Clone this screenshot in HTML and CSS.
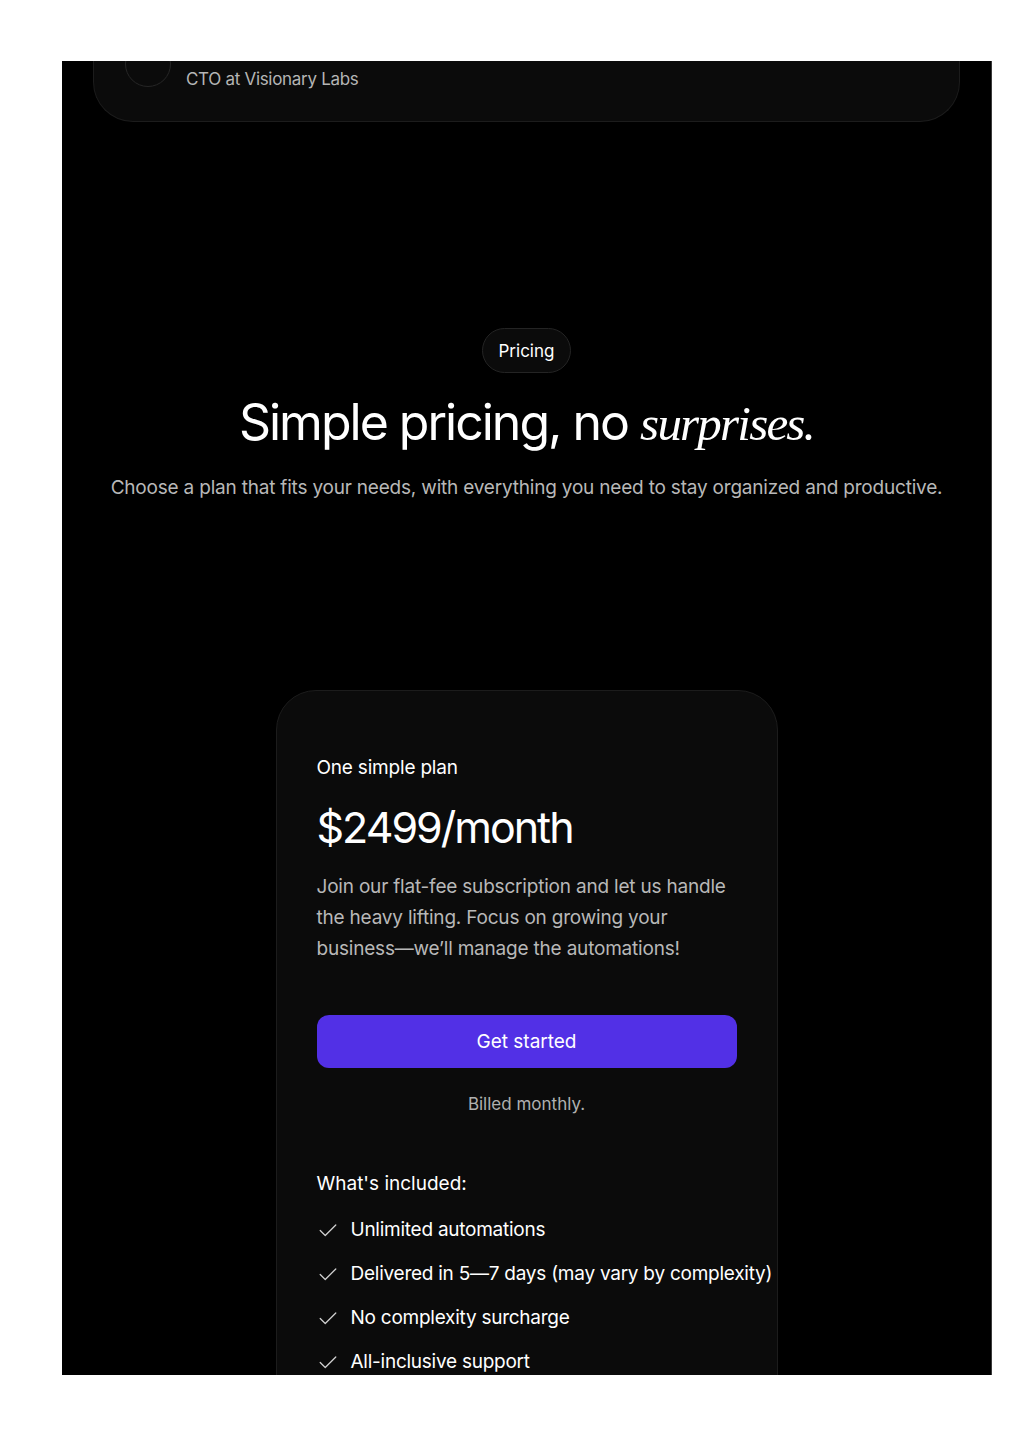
FILE: index.html
```html
<!DOCTYPE html>
<html lang="en">
<head>
    <meta charset="UTF-8">
    <meta name="viewport" content="width=device-width, initial-scale=1.0">
    <title>Pricing</title>
    <link rel="stylesheet" href="styles.css">
</head>
<body>
    <div class="frame">
        <div class="testimonial-card">
            <div class="author">
                <div class="avatar"></div>
                <div class="author-info">
                    <p class="author-name">Daniel Brooks</p>
                    <p class="author-role">CTO at Visionary Labs</p>
                </div>
            </div>
        </div>

        <section class="pricing">
            <span class="pill">Pricing</span>
            <h1>Simple pricing, no <em>surprises.</em></h1>
            <p class="subtitle">Choose a plan that fits your needs, with everything you need to stay organized and productive.</p>

            <div class="plan-card">
                <p class="plan-name">One simple plan</p>
                <h2 class="plan-price">$2499/month</h2>
                <p class="plan-desc">Join our flat-fee subscription and let us handle the heavy lifting. Focus on growing your business—we’ll manage the automations!</p>
                <button class="cta">Get started</button>
                <p class="billing">Billed monthly.</p>

                <p class="included-title">What's included:</p>
                <ul class="features">
                    <li><svg viewBox="0 0 24 24"><polyline points="3.5 12.5 9 18 20.5 6.5"/></svg>Unlimited automations</li>
                    <li><svg viewBox="0 0 24 24"><polyline points="3.5 12.5 9 18 20.5 6.5"/></svg>Delivered in 5—7 days (may vary by complexity)</li>
                    <li><svg viewBox="0 0 24 24"><polyline points="3.5 12.5 9 18 20.5 6.5"/></svg>No complexity surcharge</li>
                    <li><svg viewBox="0 0 24 24"><polyline points="3.5 12.5 9 18 20.5 6.5"/></svg>All-inclusive support</li>
                    <li><svg viewBox="0 0 24 24"><polyline points="3.5 12.5 9 18 20.5 6.5"/></svg>Cancel anytime</li>
                </ul>
            </div>
        </section>
    </div>
</body>
</html>
```

FILE: styles.css
```css
* {
    margin: 0;
    padding: 0;
    box-sizing: border-box;
}

body {
    background-color: #ffffff;
    font-family: Inter, "Noto Sans", sans-serif;
}

.frame {
    width: 930px;
    height: 1314px;
    margin: 61px 0 0 62px;
    padding: 0 31px;
    background-color: #000000;
    border-right: 1px solid #3a3a3a;
    overflow: hidden;
}

/* testimonial, cut off at the top */
.testimonial-card {
    height: 200px;
    margin-top: -139px;
    display: flex;
    align-items: flex-end;
    padding: 0 31px 30px;
    background-color: #0b0b0b;
    border: 1px solid #1c1c1c;
    border-top: none;
    border-radius: 0 0 40px 40px;
}

.author {
    display: flex;
    align-items: center;
    gap: 15px;
}

.avatar {
    width: 46px;
    height: 46px;
    border-radius: 50%;
    border: 1px solid #262626;
    margin-bottom: -6px;
}

.author-info p {
    line-height: 24px;
}

.author-name {
    color: #ffffff;
    font-size: 17px;
    margin-bottom: 12px;
}

.author-role {
    color: #b5b5b5;
    font-size: 17px;
    letter-spacing: -0.3px;
}

.pricing {
    display: flex;
    flex-direction: column;
    align-items: center;
    padding-top: 206px;
    text-align: center;
}

.pill {
    display: inline-flex;
    align-items: center;
    height: 45px;
    padding: 0 16px;
    border: 1px solid #242424;
    border-radius: 999px;
    background-color: #0b0b0b;
    color: #ffffff;
    font-size: 17px;
}

h1 {
    margin-top: 19px;
    color: #ffffff;
    font-size: 50px;
    font-weight: 400;
    line-height: 60px;
    letter-spacing: -2px;
}

h1 em {
    font-family: "Liberation Serif", serif;
    font-style: italic;
    font-size: 49px;
    letter-spacing: -1.8px;
}

.subtitle {
    margin-top: 20px;
    color: #b8b8b8;
    font-size: 19px;
    line-height: 28px;
    letter-spacing: -0.2px;
}

.plan-card {
    width: 502px;
    margin-top: 188px;
    padding: 63px 40px 0;
    min-height: 760px;
    background-color: #0b0b0b;
    border: 1px solid #1c1c1c;
    border-radius: 40px;
    text-align: left;
}

.plan-name {
    color: #ffffff;
    font-size: 19px;
    line-height: 28px;
    letter-spacing: -0.2px;
}

.plan-price {
    margin-top: 19px;
    color: #ffffff;
    font-size: 43px;
    font-weight: 400;
    line-height: 53px;
    letter-spacing: -2px;
}

.plan-desc {
    margin-top: 17px;
    color: #b8b8b8;
    font-size: 19px;
    line-height: 31px;
    letter-spacing: -0.2px;
}

.cta {
    display: block;
    width: 100%;
    height: 53px;
    margin-top: 51px;
    border: none;
    border-radius: 12px;
    background-color: #5230e6;
    color: #ffffff;
    font-family: inherit;
    font-size: 19px;
    cursor: pointer;
}

.billing {
    margin-top: 24px;
    color: #b0b0b0;
    font-size: 17px;
    line-height: 24px;
    text-align: center;
}

.included-title {
    margin-top: 54px;
    color: #ffffff;
    font-size: 19px;
    line-height: 28px;
}

.features {
    list-style: none;
    margin-top: 18px;
    display: flex;
    flex-direction: column;
    gap: 16px;
}

.features li {
    display: flex;
    align-items: center;
    gap: 12px;
    color: #ffffff;
    font-size: 19px;
    line-height: 28px;
    letter-spacing: -0.25px;
    white-space: nowrap;
}

.features svg {
    flex-shrink: 0;
    width: 22px;
    height: 22px;
    fill: none;
    stroke: #d0d0d0;
    stroke-width: 1.4;
    stroke-linecap: round;
    stroke-linejoin: round;
}
```
